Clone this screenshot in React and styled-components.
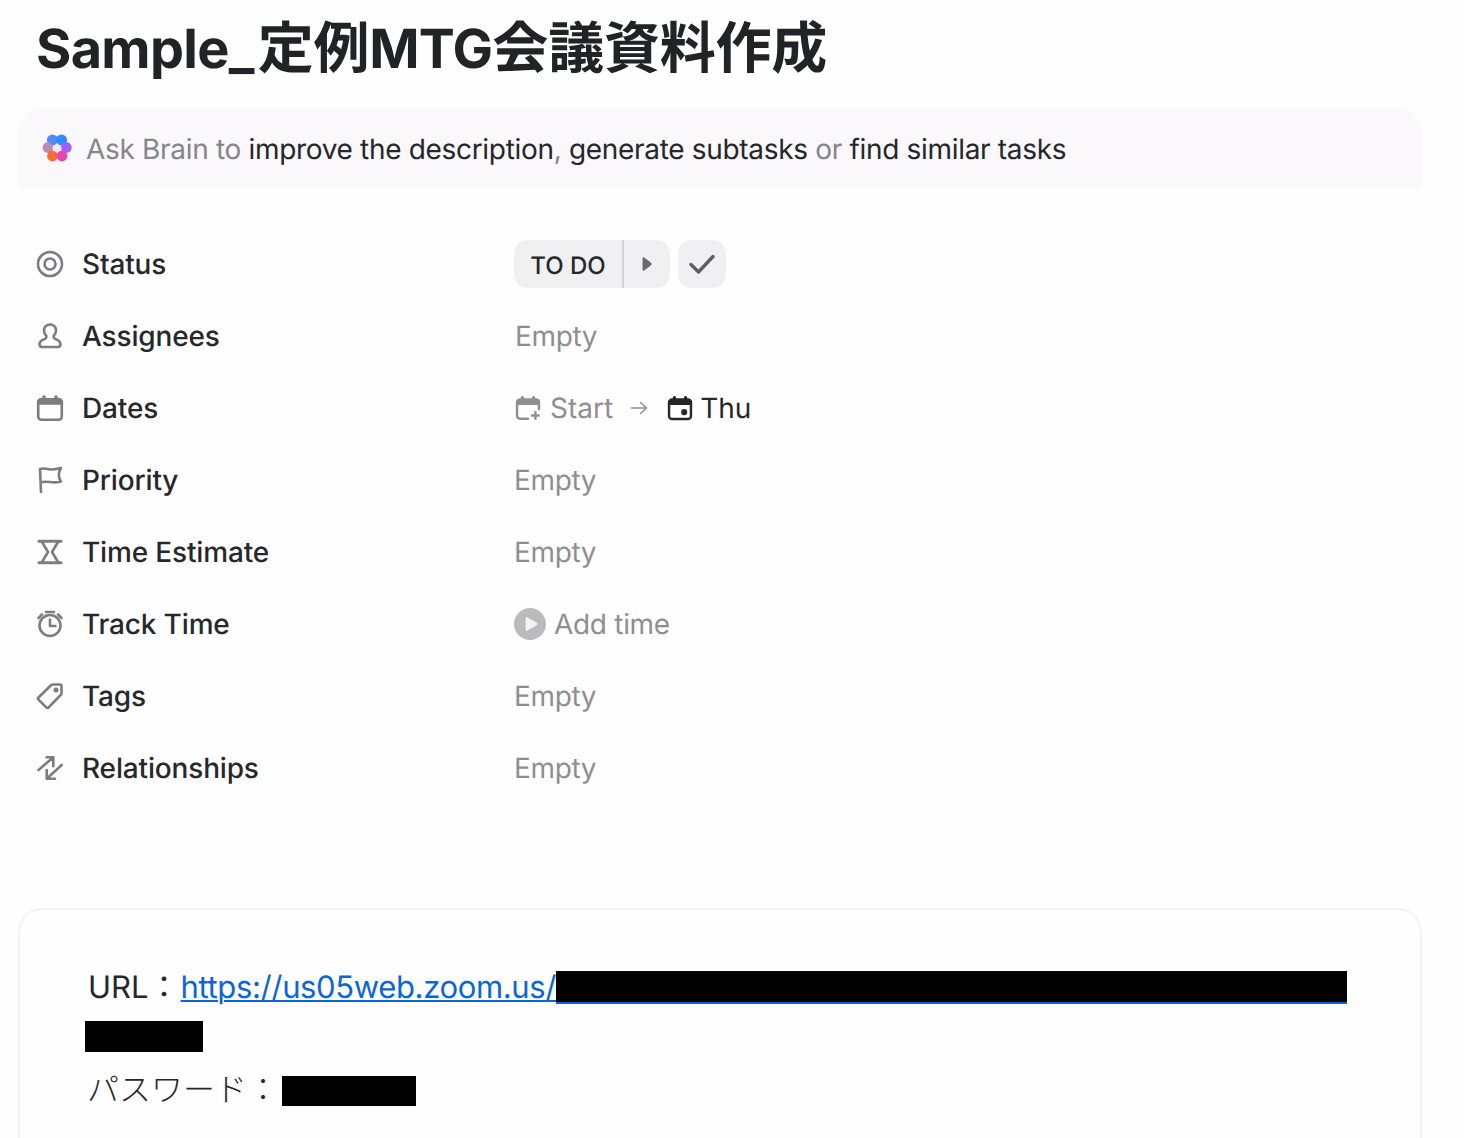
import React from 'react';
import styled, { createGlobalStyle } from 'styled-components';

const GlobalStyle = createGlobalStyle`
  html, body {
    margin: 0;
    padding: 0;
    background: #fffeff;
  }
  body {
    font-family: Inter, "Noto Sans CJK JP", sans-serif;
    color: #202020;
    overflow: hidden;
    text-rendering: geometricPrecision;
  }
`;

const Page = styled.div`
  width: 1464px;
  height: 1138px;
  overflow: hidden;
  padding: 0 42px 0 18px;
  box-sizing: border-box;
`;
const Title = styled.h1`
  margin: 0;
  padding: 14px 0 0 18px;
  height: 108px;
  box-sizing: border-box;
  font-size: 56px;
  line-height: 68px;
  font-weight: 700;
  letter-spacing: -0.2px;
  color: #222326;
  white-space: nowrap;
`;
const TitleLatin = styled.span`
  font-size: 54px;
  letter-spacing: -0.7px;
  padding-right: ${(p) => p.$after || 0}px;
`;
const BrainBar = styled.div`
  display: flex;
  align-items: center;
  height: 80px;
  padding-left: 24px;
  gap: 14px;
  background: #faf8fb;
  border-radius: 24px 24px 0 0;
  font-size: 28px;
  white-space: nowrap;
`;
const BrainText = styled.div`
  color: #87858c;
  padding-top: 2px;
  letter-spacing: -0.32px;
`;
const BrainLink = styled.span`
  color: #26272b;
`;
const Fields = styled.div`
  display: flex;
  flex-direction: column;
  margin-top: 40px;
  padding-left: 18px;
`;
const Row = styled.div`
  display: grid;
  grid-template-columns: 478px 1fr;
  align-items: center;
  height: 72px;
`;
const Label = styled.div`
  display: flex;
  align-items: center;
  gap: 18px;
  font-size: 28px;
  font-weight: 500;
  color: #27282c;
`;
const LabelText = styled.span`
  letter-spacing: -0.16px;
`;
const IconSlot = styled.span`
  display: flex;
  width: 28px;
  height: 28px;
  color: #7d7c82;
  flex: none;
`;
const Value = styled.div`
  display: flex;
  align-items: center;
  font-size: 28px;
  color: #8f8e94;
`;
const EmptyText = styled.span`
  margin-left: ${(p) => p.$shift || 0}px;
  letter-spacing: -0.35px;
`;
const StatusGroup = styled.div`
  display: flex;
  gap: 8px;
`;
const StatusPill = styled.div`
  display: flex;
  height: 48px;
  width: 156px;
  background: #f0eff2;
  border-radius: 14px;
  overflow: hidden;
`;
const StatusName = styled.div`
  width: 110px;
  display: flex;
  align-items: center;
  justify-content: center;
  padding-top: 2px;
  box-sizing: border-box;
  flex: none;
  font-size: 24px;
  font-weight: 500;
  color: #26272b;
  border-right: 2px solid #d3d2d6;
`;
const StatusNext = styled.div`
  flex: 1;
  display: flex;
  align-items: center;
  justify-content: center;
  color: #6b6a70;
`;
const CheckButton = styled.div`
  display: flex;
  align-items: center;
  justify-content: center;
  width: 48px;
  height: 48px;
  border-radius: 14px;
  background: #f0eff2;
  color: #5f5e64;
`;
const DateRange = styled.div`
  display: flex;
  align-items: center;
  margin-left: 1px;
`;
const DateItem = styled.div`
  display: flex;
  align-items: center;
  gap: ${(p) => (p.$set ? 7 : 9)}px;
  color: ${(p) => (p.$set ? '#26272b' : '#8f8e94')};
`;
const DateArrow = styled.span`
  display: flex;
  color: #8f8e94;
  margin: 0 19px 0 17px;
`;
const TimeButton = styled.div`
  display: flex;
  align-items: center;
  gap: 8px;
  letter-spacing: -0.3px;
`;
const DescriptionCard = styled.div`
  margin-top: 104px;
  height: 400px;
  box-sizing: border-box;
  border: 2px solid #f3f2f4;
  border-radius: 24px;
  padding: 52px 66px 0 65px;
  font-size: 31px;
  color: #26272b;
`;
const LinkLine = styled.div`
  display: flex;
  align-items: flex-start;
  height: 50px;
  line-height: 50px;
  padding-left: 3px;
  white-space: nowrap;
`;
const UrlLabel = styled.span`
  padding-top: 1px;
`;
const Link = styled.a`
  color: #0a66d6;
  margin-left: 1px;
  padding-top: 1px;
  letter-spacing: -0.36px;
  text-decoration: underline;
  text-decoration-thickness: 2px;
  text-underline-offset: 2px;
`;
const Redacted = styled.span`
  display: inline-block;
  flex: none;
  width: ${(p) => p.$w}px;
  height: ${(p) => p.$h}px;
  margin-top: ${(p) => p.$top || 0}px;
  margin-left: ${(p) => p.$left || 0}px;
  background: #000;
  box-shadow: ${(p) => (p.$underlined ? '0 2px 0 #0a66d6' : 'none')};
`;
const RedactedLine = styled.div`
  display: flex;
  height: 50px;
  align-items: flex-start;
`;
const PasswordLine = styled(LinkLine)`
  height: 52px;
  line-height: 52px;
  margin-top: 2px;
  padding-left: 2px;
  font-size: 32px;
  font-weight: 300;
`;

const Svg = ({ size = 28, children }) => (
  <svg width={size} height={size} viewBox="0 0 28 28" fill="none" stroke="currentColor" strokeWidth="2.6" strokeLinecap="round" strokeLinejoin="round">
    {children}
  </svg>
);

const BrainIcon = () => (
  <svg width="30" height="30" viewBox="0 0 30 30">
    <circle cx="10.500" cy="7" r="5.600" fill="#4f8cf6" />
    <circle cx="19.500" cy="7" r="5.600" fill="#2f8dff" />
    <circle cx="24.300" cy="14.500" r="5.400" fill="#a45df4" />
    <circle cx="6" cy="14.500" r="5.400" fill="#b58db8" />
    <circle cx="10.500" cy="23" r="5.400" fill="#f3702f" />
    <circle cx="20" cy="23" r="5.400" fill="#ea47ae" />
    <path d="M15 10 L20 15 L15 20 L10 15 Z" fill="#f7e6f3" />
  </svg>
);

const StatusIcon = () => (
  <Svg>
    <circle cx="14" cy="14" r="12" />
    <circle cx="14" cy="14" r="5.500" />
  </Svg>
);
const PersonIcon = () => (
  <Svg>
    <path d="M14 2.500c-3.600 0-6 2.600-6 6 0 2.300 1 4 2.300 5.200v1.200c0 1-.6 1.600-1.600 2-2.900 1-5.200 2.500-5.200 5.400 0 1.700 1 2.700 2.700 2.700h15.600c1.700 0 2.700-1 2.700-2.700 0-2.900-2.300-4.400-5.200-5.400-1-.4-1.600-1-1.600-2v-1.200c1.300-1.200 2.300-2.900 2.300-5.200 0-3.400-2.400-6-6-6z" />
  </Svg>
);
// rounded calendar top: a solid band with two ring bumps
const CalendarTop = () => (
  <>
    <path d="M2.200 9.500V8.500c0-2 1.300-3.300 3.300-3.300h17c2 0 3.300 1.300 3.300 3.300v1z" fill="currentColor" />
    <path d="M8 3v3M20 3v3" strokeWidth="3.600" />
  </>
);
const CalendarIcon = () => (
  <Svg>
    <rect x="2.200" y="5.200" width="23.600" height="20.600" rx="3.300" />
    <CalendarTop />
  </Svg>
);
const FlagIcon = () => (
  <Svg>
    <path d="M5 26L4 3c5-1.500 8 .5 11 .5s6-.5 10-1.500c-2.500 4-3 9 0 13.500-5 1.500-8 1-11 .5-4-.5-7-.5-9.500.5" />
  </Svg>
);
const HourglassIcon = () => (
  <Svg>
    <path d="M3 3.200h22M3 24.800h22" strokeWidth="3" />
    <path d="M6 4l6 10-6 10M22 4l-6 10 6 10" />
  </Svg>
);
const TimerIcon = () => (
  <Svg>
    <circle cx="14" cy="15.500" r="10.500" />
    <path d="M14 9.500v6.500h5.500" />
    <path d="M10 2h8M2.500 8l3.500-3.500M25.500 8L22 4.500" />
  </Svg>
);
const TagIcon = () => (
  <Svg>
    <path d="M2.500 15.500L15 3.200c.4-.4 1-.7 1.600-.7h7.400c.9 0 1.500.6 1.500 1.500v7.300c0 .6-.2 1.200-.7 1.600L12.500 25.500c-.6.600-1.500.6-2.100 0l-7.900-7.900c-.6-.6-.6-1.500 0-2.100z" />
    <circle cx="20" cy="8" r="1.200" fill="currentColor" />
  </Svg>
);
const RelationIcon = () => (
  <Svg>
    <path d="M2.500 16L17.300 3.300M10.600 3.300h6.700v9" />
    <path d="M25.700 11L10.700 24.800M10.700 16v8.800H19" />
  </Svg>
);

const StartIcon = () => (
  <Svg size={26}>
    <path d="M14 25.500H5.500c-2 0-3.300-1.300-3.300-3.300V8.500c0-2 1.300-3.300 3.300-3.300h17c2 0 3.300 1.300 3.300 3.300V15" />
    <CalendarTop />
    <path d="M22 18.500v7M18.500 22h7" />
  </Svg>
);
const DueIcon = () => (
  <Svg size={26}>
    <rect x="2.200" y="5.200" width="23.600" height="20.600" rx="3.300" />
    <CalendarTop />
    <circle cx="18.500" cy="18.500" r="2" fill="currentColor" />
  </Svg>
);
const ArrowIcon = () => (
  <svg width="18" height="18" viewBox="0 0 18 18" fill="none" stroke="currentColor" strokeWidth="1.600" strokeLinecap="round" strokeLinejoin="round">
    <path d="M1.500 9h15M10.500 3.500L16.500 9l-6 5.500" />
  </svg>
);
const PlayCircle = () => (
  <svg width="32" height="32" viewBox="0 0 32 32">
    <circle cx="16" cy="16" r="16" fill="#bbbabd" />
    <path d="M11.500 10.500c0-1 1-1.600 1.900-1.100l9.500 5.400c.9.500.9 1.800 0 2.300l-9.500 5.400c-.9.500-1.900-.1-1.900-1.100z" fill="#f4f3f5" />
  </svg>
);

const FieldLabel = ({ icon: Icon, children }) => (
  <Label>
    <IconSlot><Icon /></IconSlot>
    <LabelText>{children}</LabelText>
  </Label>
);

function App() {
  return (
    <Page>
      <GlobalStyle />
      <Title>
        <TitleLatin $after={4}>Sample_</TitleLatin>定例<TitleLatin>MTG</TitleLatin>会議資料作成
      </Title>
      <BrainBar>
        <BrainIcon />
        <BrainText>
          Ask Brain to <BrainLink>improve the description</BrainLink>, <BrainLink>generate subtasks</BrainLink> or <BrainLink>find similar tasks</BrainLink>
        </BrainText>
      </BrainBar>

      <Fields>
        <Row>
          <FieldLabel icon={StatusIcon}>Status</FieldLabel>
          <Value>
            <StatusGroup>
              <StatusPill>
                <StatusName>TO DO</StatusName>
                <StatusNext>
                  <svg width="10" height="14" viewBox="0 0 10 14"><path d="M0.500 1.500c0-1 1-1.500 1.800-.9l7 5.500c.6.500.6 1.300 0 1.800l-7 5.500c-.8.600-1.800.1-1.800-.9z" fill="currentColor" /></svg>
                </StatusNext>
              </StatusPill>
              <CheckButton>
                <svg width="26" height="20" viewBox="0 0 26 20" fill="none" stroke="currentColor" strokeWidth="3.400" strokeLinecap="round" strokeLinejoin="round"><path d="M2 10.500l7.500 7.500L24 2.500" /></svg>
              </CheckButton>
            </StatusGroup>
          </Value>
        </Row>
        <Row>
          <FieldLabel icon={PersonIcon}>Assignees</FieldLabel>
          <Value><EmptyText $shift={1}>Empty</EmptyText></Value>
        </Row>
        <Row>
          <FieldLabel icon={CalendarIcon}>Dates</FieldLabel>
          <Value>
            <DateRange>
              <DateItem><StartIcon />Start</DateItem>
              <DateArrow><ArrowIcon /></DateArrow>
              <DateItem $set><DueIcon />Thu</DateItem>
            </DateRange>
          </Value>
        </Row>
        <Row>
          <FieldLabel icon={FlagIcon}>Priority</FieldLabel>
          <Value><EmptyText>Empty</EmptyText></Value>
        </Row>
        <Row>
          <FieldLabel icon={HourglassIcon}>Time Estimate</FieldLabel>
          <Value><EmptyText>Empty</EmptyText></Value>
        </Row>
        <Row>
          <FieldLabel icon={TimerIcon}>Track Time</FieldLabel>
          <Value>
            <TimeButton><PlayCircle />Add time</TimeButton>
          </Value>
        </Row>
        <Row>
          <FieldLabel icon={TagIcon}>Tags</FieldLabel>
          <Value><EmptyText>Empty</EmptyText></Value>
        </Row>
        <Row>
          <FieldLabel icon={RelationIcon}>Relationships</FieldLabel>
          <Value><EmptyText>Empty</EmptyText></Value>
        </Row>
      </Fields>

      <DescriptionCard>
        <LinkLine>
          <UrlLabel>URL：</UrlLabel><Link href="#">https://us05web.zoom.us/</Link>
          <Redacted $w={791} $h={31} $top={9} $underlined />
        </LinkLine>
        <RedactedLine>
          <Redacted $w={118} $h={31} $top={9} />
        </RedactedLine>
        <PasswordLine>
          パスワード：
          <Redacted $w={134} $h={30} $top={12} $left={3} />
        </PasswordLine>
      </DescriptionCard>
    </Page>
  );
}

export default App;
